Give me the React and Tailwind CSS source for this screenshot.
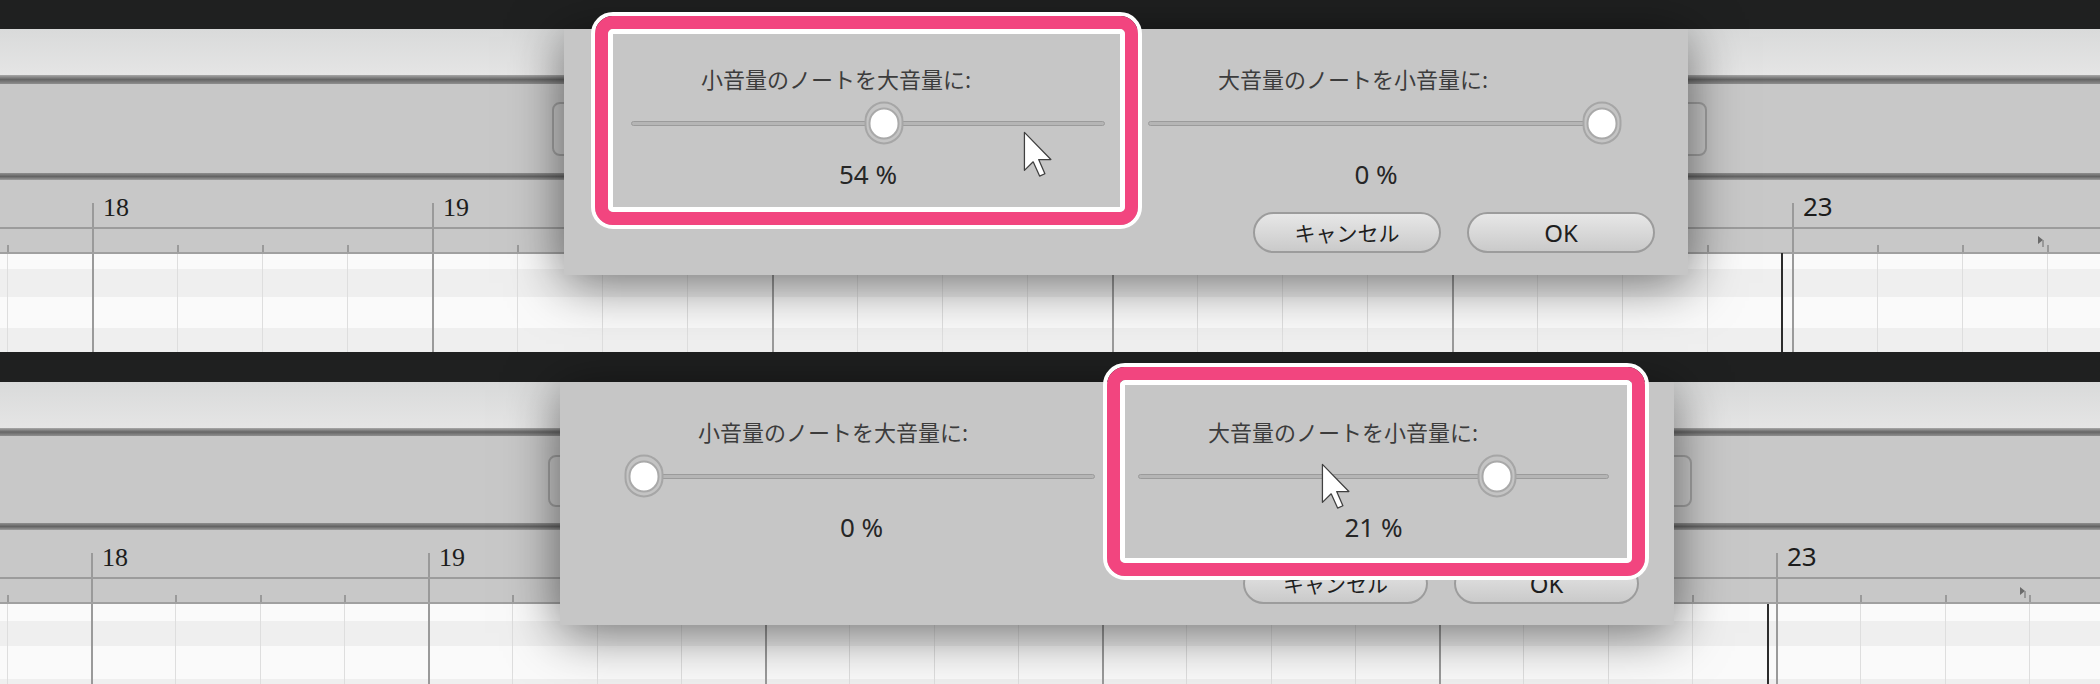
import React from "react";

const frames = [
  {
    frameCls: "h-[352px]",
    darkCls: "h-[29px]",
    lightCls: "h-[46px]",
    dl1Cls: "h-[9px]",
    midCls: "h-[89px]",
    dl2Cls: "h-[7px]",
    behindCls: "ml-[552px] mt-[18px] w-[1155px] h-[54px]",
    rulerShift: "-ml-[248px]",
    barCls: "w-[340px]",
    qCls: "w-[85px]",
    rows: ["h-[15px] bg-[#fafafa]", "h-[28px] bg-[#efefef]", "h-[31px] bg-[#fafafa]", "flex-1 bg-[#efefef]"],
    playCls: "left-[1781px] top-[253px] bottom-0",
    markCls: "left-[2037px] top-[235px]",
    dialog: {
      pos: "left-[564px] top-[29px] w-[1124px] h-[246px]",
      pl: "pl-[67px]",
      w1: "w-[474px]",
      w2: "w-[456px]",
      t1: 253,
      t2: 454,
      p1: "54 %",
      p2: "0 %",
      btnRow: "ml-[622px] mt-[23px]",
      btnW: "w-[188px]",
    },
    pinkCls: "left-[591px] top-[12px] w-[551px] h-[217px]",
    cursorCls: "left-[1023px] top-[131px]",
  },
  {
    frameCls: "h-[332px]",
    darkCls: "h-[30px]",
    lightCls: "h-[46px]",
    dl1Cls: "h-[8px]",
    midCls: "h-[87px]",
    dl2Cls: "h-[7px]",
    behindCls: "ml-[548px] mt-[19px] w-[1144px] h-[52px]",
    rulerShift: "-ml-[246px]",
    barCls: "w-[337px]",
    qCls: "w-[84.25px]",
    rows: ["h-[17px] bg-[#fafafa]", "h-[25px] bg-[#efefef]", "h-[33px] bg-[#fafafa]", "flex-1 bg-[#efefef]"],
    playCls: "left-[1767px] top-[252px] bottom-0",
    markCls: "left-[2019px] top-[234px]",
    dialog: {
      pos: "left-[560px] top-[30px] w-[1114px] h-[243px]",
      pl: "pl-[68px]",
      w1: "w-[467px]",
      w2: "w-[471px]",
      t1: 16,
      t2: 359,
      p1: "0 %",
      p2: "21 %",
      btnRow: "ml-[615px] mt-[21px]",
      btnW: "w-[185px]",
    },
    pinkCls: "left-[1103px] top-[11px] w-[546px] h-[217px]",
    cursorCls: "left-[1321px] top-[111px]",
  },
];

function Cursor({ className }) {
  return (
    <svg className={`absolute ${className}`} width="30" height="46" viewBox="-0.6 -0.6 13 20">
      <path
        d="M0 0 L0 16.5 L3.8 12.8 L6.6 19 L8.9 18 L6.2 11.8 L11.5 11.8 Z"
        fill="#ffffff"
        stroke="#404040"
        strokeWidth="0.55"
        strokeLinejoin="round"
      />
    </svg>
  );
}

function Thumb({ x }) {
  return (
    <div
      className="absolute top-1/2 -translate-x-1/2 -translate-y-1/2 w-[39px] h-[43px] rounded-full border-2 border-[#a6a6a6] bg-[#c4c4c4] flex items-center justify-center"
      style={{ left: x }}
    >
      <div className="w-[31px] h-[32px] rounded-full bg-white border-2 border-[#a9a9a9]" />
    </div>
  );
}

function Column({ w, label, pct, thumbX }) {
  return (
    <div className={`flex flex-col ${w}`}>
      <div className="pl-[70px] text-[22px] leading-[30px] text-[#3c3c3c] whitespace-nowrap font-['Noto_Sans_CJK_JP','Noto_Sans',sans-serif]">
        {label}
      </div>
      <div className="relative mt-[9px] h-[42px] flex items-center">
        <div className="h-[5px] w-full rounded-full bg-[#b5b5b5] border border-[#9b9b9b]" />
        <Thumb x={thumbX} />
      </div>
      <div className="mt-[15px] text-center text-[26px] leading-[30px] text-[#262626] font-['Noto_Sans',sans-serif]">
        {pct}
      </div>
    </div>
  );
}

function Btn({ w, children, latin }) {
  return (
    <div
      className={`${w} h-[41px] shrink-0 rounded-full border-2 border-[#9c9c9c] bg-linear-to-b from-[#e7e7e7] to-[#cacaca] flex items-center justify-center text-[#1e1e1e] ${
        latin
          ? "text-[24px] font-['Noto_Sans',sans-serif]"
          : "text-[21px] font-['Noto_Sans_CJK_JP','Noto_Sans',sans-serif]"
      }`}
    >
      {children}
    </div>
  );
}

function Dialog({ d }) {
  return (
    <div className={`absolute ${d.pos} bg-[#c6c6c6] shadow-[0_8px_50px_rgba(0,0,0,0.55)] flex flex-col pt-[34px] ${d.pl}`}>
      <div className="flex gap-[43px]">
        <Column w={d.w1} label="小音量のノートを大音量に:" pct={d.p1} thumbX={d.t1} />
        <Column w={d.w2} label="大音量のノートを小音量に:" pct={d.p2} thumbX={d.t2} />
      </div>
      <div className={`flex gap-[26px] ${d.btnRow}`}>
        <Btn w={d.btnW}>キャンセル</Btn>
        <Btn w={d.btnW} latin>
          OK
        </Btn>
      </div>
    </div>
  );
}

function Pink({ cls }) {
  return (
    <div className={`absolute ${cls} rounded-[22px] border-[4px] border-white flex`}>
      <div className="flex-1 flex rounded-[18px] border-[13px] border-[#f2457f]">
        <div className="flex-1 rounded-[5px] border-[5px] border-white" />
      </div>
    </div>
  );
}

function BarColumn({ f, num, showNum }) {
  const serif = num < 23;
  return (
    <div className={`flex flex-col shrink-0 h-full ${f.barCls}`}>
      <div className="flex h-[47px] bg-[#c8c8c8]">
        <div className="w-[2px] mt-[23px] bg-[#9a9a9a]" />
        {showNum && (
          <span
            className={`ml-[9px] text-[26px] leading-[26px] text-[#1c1c1c] ${
              serif ? "mt-[15px] font-['Liberation_Serif',serif]" : "mt-[13px] font-['Noto_Sans',sans-serif]"
            }`}
          >
            {num}
          </span>
        )}
      </div>
      <div className="h-[2px] bg-[#9c9c9c]" />
      <div className="flex h-[23px] bg-[#c8c8c8]">
        {[0, 1, 2, 3].map((q) =>
          q === 0 ? (
            <div key={q} className={`${f.qCls} shrink-0 border-l-2 border-[#9a9a9a]`} />
          ) : (
            <div key={q} className={`${f.qCls} shrink-0 flex items-end`}>
              <div className="w-[2px] h-[7px] bg-[#9a9a9a]" />
            </div>
          )
        )}
      </div>
      <div className="h-[2px] bg-[#a0a0a0]" />
      <div className="flex flex-1 min-h-0">
        {[0, 1, 2, 3].map((q) => (
          <div
            key={q}
            className={`${f.qCls} shrink-0 flex flex-col ${
              q === 0 ? "border-l-2 border-[#9a9a9a]" : "border-l border-[#dedede]"
            }`}
          >
            {f.rows.map((r, i) => (
              <div key={i} className={r} />
            ))}
          </div>
        ))}
      </div>
    </div>
  );
}

function Frame({ f }) {
  return (
    <div className={`relative overflow-hidden w-[2100px] shrink-0 flex flex-col ${f.frameCls}`}>
      <div className={`${f.darkCls} bg-[#1f2020] shrink-0`} />
      <div className={`${f.lightCls} shrink-0 bg-linear-to-b from-[#d9dada] to-[#e5e5e5]`} />
      <div className={`${f.dl1Cls} shrink-0 bg-linear-to-b from-[#a9a9a9] via-[#666666] to-[#8f8f8f]`} />
      <div className={`${f.midCls} shrink-0 bg-[#c8c8c8] flex`}>
        <div className={`${f.behindCls} shrink-0 rounded-[8px] border-2 border-[#a3a3a3] bg-[#cbcbcb]`} />
      </div>
      <div className={`${f.dl2Cls} shrink-0 bg-linear-to-b from-[#8f8f8f] via-[#646464] to-[#9d9d9d]`} />
      <div className={`flex flex-1 min-h-0 ${f.rulerShift}`}>
        {[17, 18, 19, 20, 21, 22, 23, 24].map((n) => (
          <BarColumn key={n} f={f} num={n} showNum={n > 17 && n < 24} />
        ))}
      </div>
      <div className={`absolute w-[2px] bg-[#2c2c2c] ${f.playCls}`} />
      <svg className={`absolute ${f.markCls}`} width="8" height="12" viewBox="0 0 8 12">
        <path d="M1 1 L6 5 L1 9 Z" fill="#6a6a6a" />
        <path d="M6 5 L6 12" stroke="#8a8a8a" strokeWidth="1.5" />
      </svg>
      <Dialog d={f.dialog} />
      <Pink cls={f.pinkCls} />
      <Cursor className={f.cursorCls} />
    </div>
  );
}

export default function App() {
  return (
    <div className="w-[2100px] h-[684px] overflow-hidden flex flex-col bg-[#1f2020]">
      {frames.map((f, i) => (
        <Frame key={i} f={f} />
      ))}
    </div>
  );
}
